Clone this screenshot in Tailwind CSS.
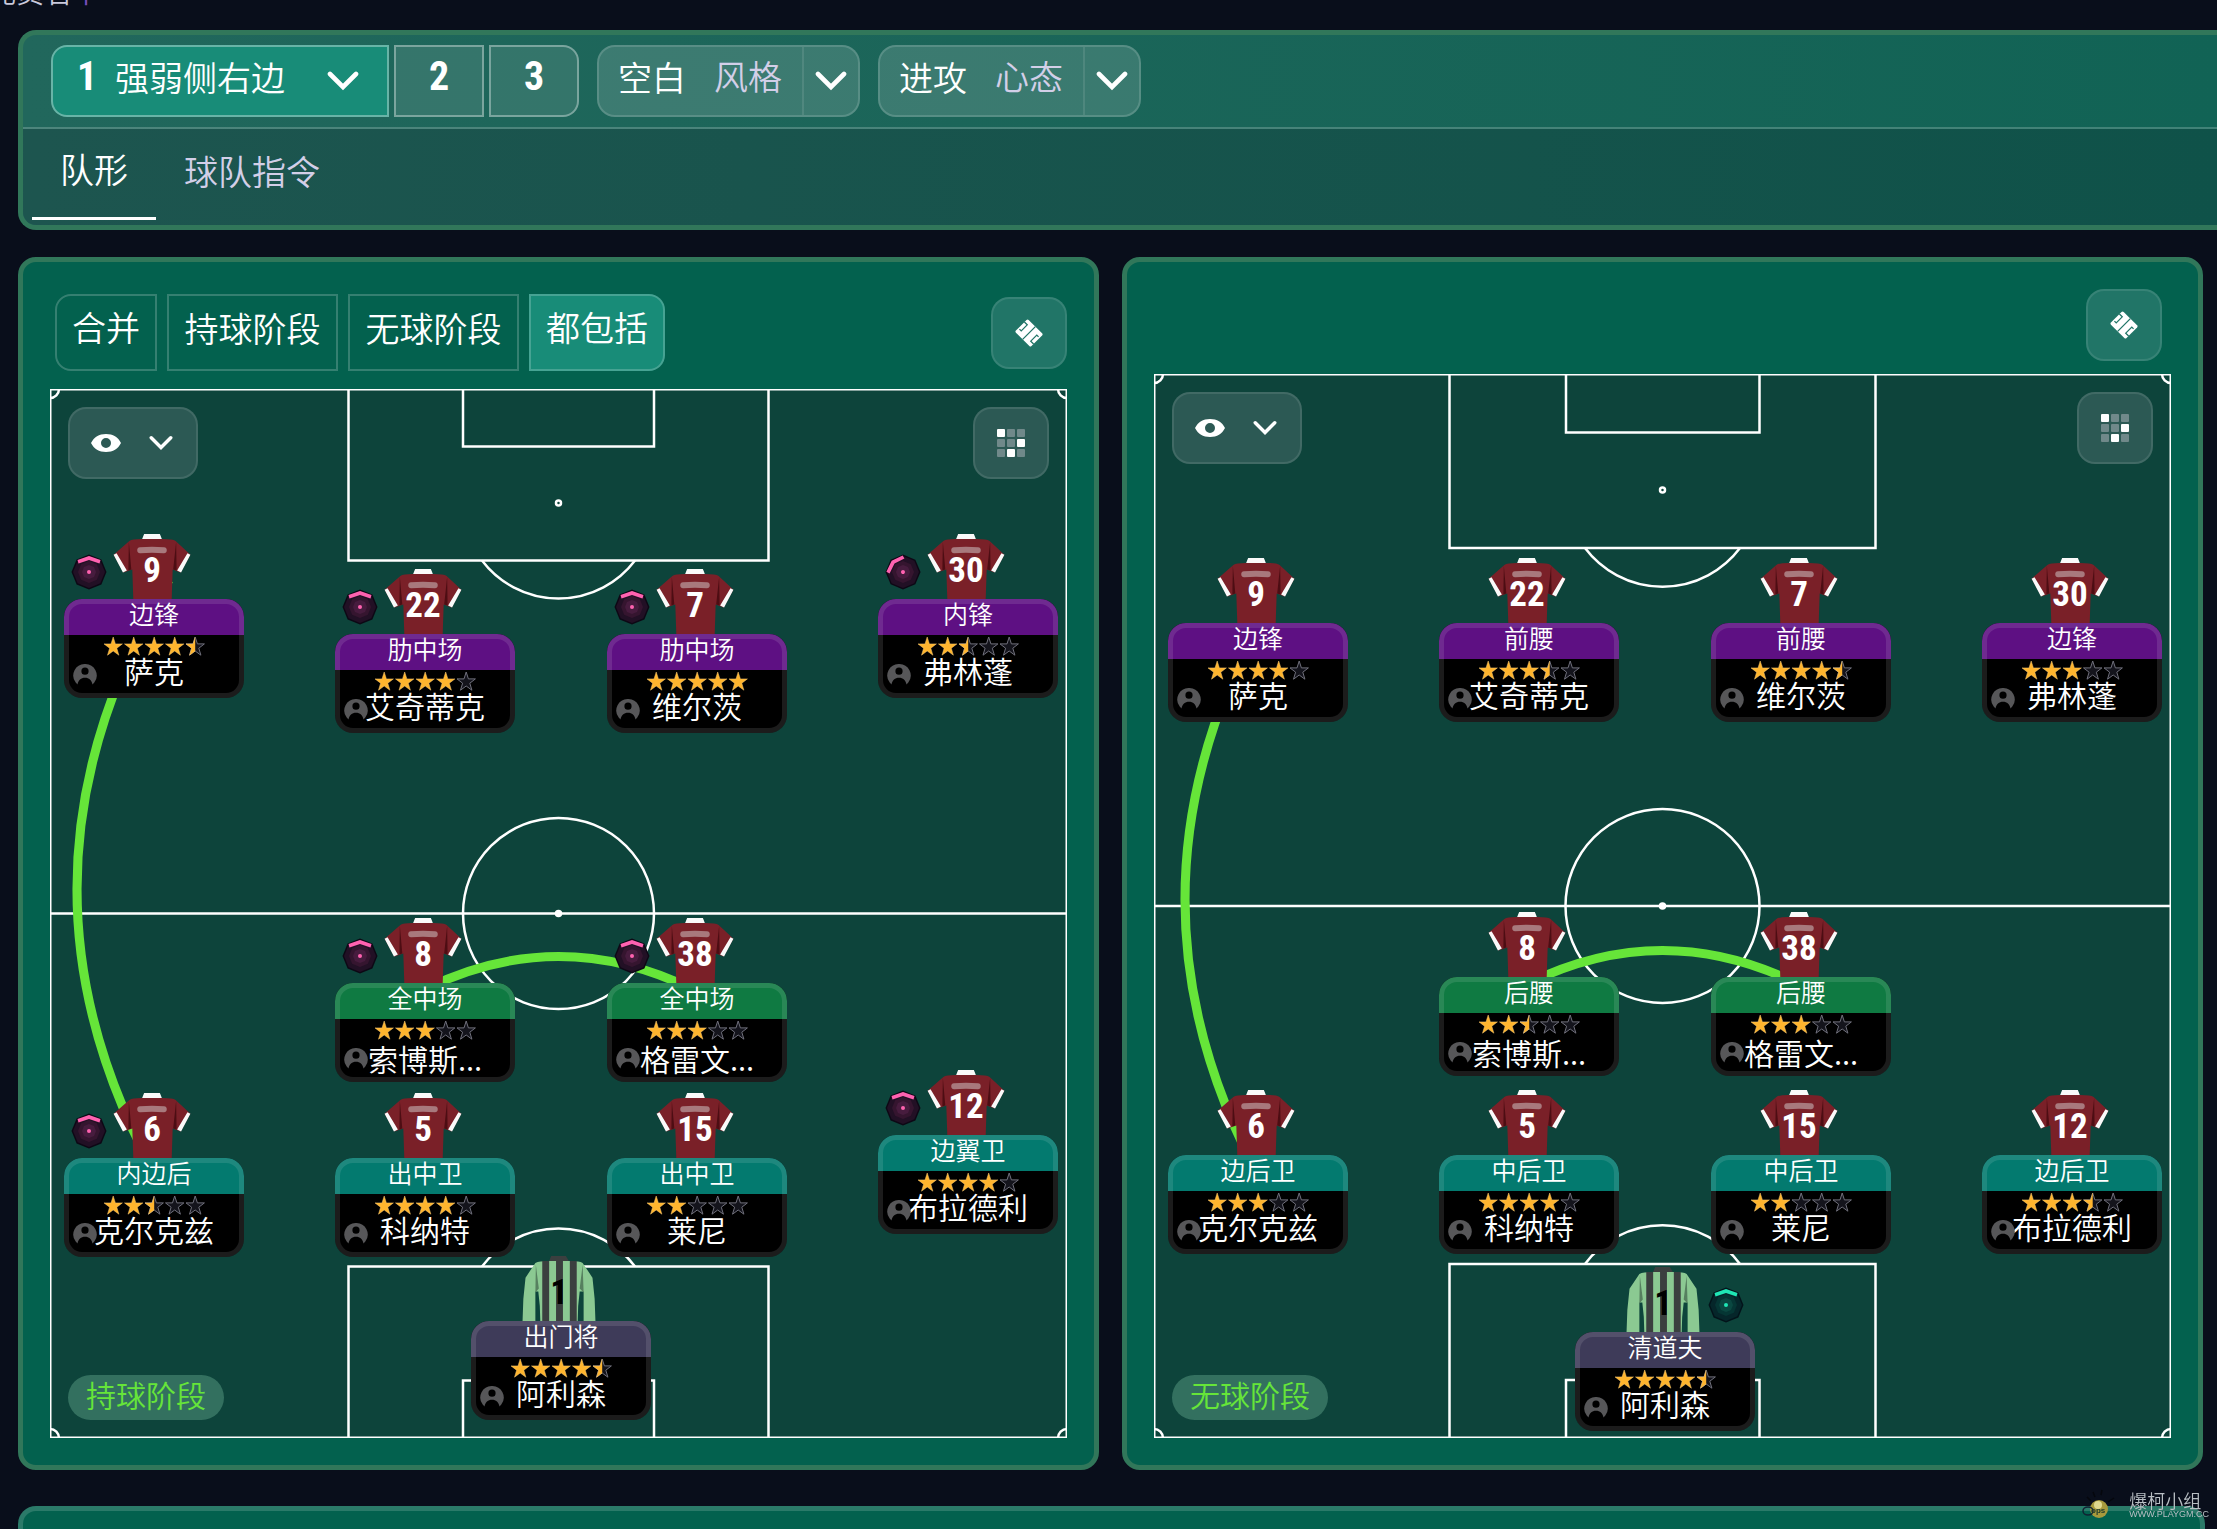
<!DOCTYPE html>
<html lang="zh-CN">
<head>
    <meta charset="UTF-8">
    <meta name="viewport" content="width=device-width, initial-scale=1.0">
    <title>战术 - 队形</title>
    <script src="https://cdn.jsdelivr.net/npm/@tailwindcss/browser@4"></script>
</head>
<body class="bg-[#090e1b] min-h-screen text-white overflow-x-hidden font-[350] font-['Noto_Sans_CJK_SC',sans-serif]">

    <!-- shared icons -->
    <svg class="absolute size-0">
        <symbol id="chevron" viewBox="0 0 32 20">
            <path d="M3 3 16 16 29 3" fill="none" stroke="#fff" stroke-width="4.6" stroke-linecap="round"/>
        </symbol>
        <symbol id="eye" viewBox="0 0 30 18">
            <path fill="#fff" fill-rule="evenodd" d="M15 0C22 0 27 3 30 9 27 15 22 18 15 18S3 15 0 9C3 3 8 0 15 0ZM15 4a5 5 0 1 0 0 10a5 5 0 1 0 0-10Z"/>
        </symbol>
        <symbol id="field" viewBox="-15 -15 30 30">
            <g transform="rotate(45)">
                <rect x="-11" y="-9" width="22" height="18" rx="1.5" fill="#fff"/>
                <path d="M0-9V9M-11-4.500H-7V4H-9.500M11 4.500H7V-4H9.500" fill="none" stroke="#217567" stroke-width="1.3"/>
            </g>
        </symbol>
        <symbol id="cells" viewBox="0 0 28 28">
            <g fill="#70898a">
                <rect x="10" width="8" height="8" rx="1"/><rect x="20" width="8" height="8" rx="1"/>
                <rect y="10" width="8" height="8" rx="1"/><rect x="10" y="10" width="8" height="8" rx="1"/>
                <rect y="20" width="8" height="8" rx="1"/><rect x="20" y="20" width="8" height="8" rx="1"/>
            </g>
            <g fill="#fff">
                <rect width="8" height="8" rx="1"/><rect x="20" y="10" width="8" height="8" rx="1"/><rect x="10" y="20" width="8" height="8" rx="1"/>
            </g>
        </symbol>
        <symbol id="person" viewBox="0 0 24 21">
            <path fill="#575759" fill-rule="evenodd" d="M12 0a11.500 11.500 0 0 1 9.300 18.500L19.500 20.500C18.800 16.500 16 13.800 12 13.800S5.200 16.500 4.500 20.500L2.700 18.500A11.500 11.500 0 0 1 12 0ZM12 3.600a3.600 3.600 0 1 0 0 7.200a3.600 3.600 0 1 0 0-7.200Z"/>
        </symbol>
        <symbol id="shirt" viewBox="0 0 78 66">
            <path d="M16 7 0 21 10 39 19 36 20 66H59L60 36 68 39 78 21 63 7Q60 5 50 5H28Q19 5 16 7Z" fill="#7a2028"/>
            <path d="M15.500 8 18 36 15 37ZM63.500 8 60.500 36 64 37Z" fill="#4d0d13"/>
            <path d="M31 0H47L49 5H29Z" fill="#fafafa"/>
            <path d="M0 21 3 19.500 13.500 37 9.500 39ZM78 21 75 19.500 64.500 37 68.500 39Z" fill="#fafafa"/>
            <path d="M27 16.500Q39 15.500 51 16.500" fill="none" stroke="#a8797d" stroke-width="6" stroke-linecap="round"/>
        </symbol>
        <symbol id="keeper" viewBox="0 0 78 66">
            <path d="M15 7 5 22Q2 44 2 66H15V36L18 36Q20 50 20 66H58Q58 50 60 36L64 36V66H76Q76 44 73 22L63 7Q60 5 50 5H28Q19 5 15 7Z" fill="#8bc992"/>
            <path d="M15.500 9 18.500 33 15 37ZM63 9 60 33 64 37Z" fill="#56805f"/>
            <path d="M31 0H46L49 5H29Z" fill="#3b3f3f"/>
            <path d="M22 5H29V66H22ZM36 5H43V66H36ZM50 5H57V66H50Z" fill="#3b3f3f"/>
        </symbol>
        <symbol id="focus" viewBox="-18 -18 36 36">
            <path d="M0-17.500 12.400-12.400 17.500 0 12.400 12.400 0 17.500-12.400 12.400-17.500 0-12.400-12.400Z" fill="#0d0815"/>
            <path d="M0-16 11.300-11.300 16 0 11.300 11.300 0 16-11.300 11.300-16 0-11.300-11.300Z" fill="#221025"/>
            <path d="M0-11 7.800-7.800 11 0 7.800 7.800 0 11-7.800 7.800-11 0-7.800-7.800Z" fill="#35152f"/>
            <path d="M0-7 5-5 7 0 5 5 0 7-5 5-7 0-5-5Z" fill="#471c3e"/>
            <path d="M-11.500-12 0-16 11.500-12 10.500-8.500 0-12-10.500-8.500Z" fill="#ff62b0"/>
            <circle r="2" fill="#ff62b0"/>
        </symbol>
        <symbol id="focus-green" viewBox="-18 -18 36 36">
            <path d="M0-17.500 12.400-12.400 17.500 0 12.400 12.400 0 17.500-12.400 12.400-17.500 0-12.400-12.400Z" fill="#03131a"/>
            <path d="M0-16 11.300-11.300 16 0 11.300 11.300 0 16-11.300 11.300-16 0-11.300-11.300Z" fill="#05262a"/>
            <path d="M0-11 7.800-7.800 11 0 7.800 7.800 0 11-7.800 7.800-11 0-7.800-7.800Z" fill="#053634"/>
            <path d="M0-7 5-5 7 0 5 5 0 7-5 5-7 0-5-5Z" fill="#0a4841"/>
            <path d="M-11.500-12 0-16 11.500-12 10.500-8.500 0-12-10.500-8.500Z" fill="#1fe6b4"/>
            <circle r="2" fill="#1fe6b4"/>
        </symbol>
        <path id="star" d="M9.200 0 11.400 6.900H18.400L12.800 11.200 14.900 18.200 9.200 14 3.500 18.200 5.600 11.200 0 6.900H7Z"/>
        <clipPath id="half"><rect y="-1" width="9.200" height="20"/></clipPath>
    </svg>

    <div class="h-[30px] overflow-hidden">
        <p class="-mt-6 -ml-3 text-[28px] leading-[30px] text-[#c9c9dc]">完员名<span class="text-[#7a4fc0]">十</span></p>
    </div>

    <!-- tactic bar -->
    <header class="ml-[18px] h-[200px] border-[5px] border-r-0 border-[#31775a] rounded-l-[18px] bg-linear-to-r from-[#21675c] to-[#116355]">
        <div class="flex h-[94px] items-center gap-[18px] border-b-2 border-white/20 pl-7">
            <div class="flex h-[72px] gap-[5px] text-[34px]">
                <div class="relative w-[338px] rounded-l-2xl border-2 border-white/35 bg-[#188c78]">
                    <label for="tactic" class="absolute top-[10px] left-6 font-['Roboto_Condensed','Roboto','Liberation_Sans',sans-serif] text-[40px] leading-10 font-bold">1</label>
                    <select id="tactic" class="h-full w-full appearance-none bg-transparent pb-[10px] pl-[62px]"><option>强弱侧右边</option></select>
                    <svg class="pointer-events-none absolute top-6 right-7 h-5 w-8"><use href="#chevron"/></svg>
                </div>
                <button class="w-[90px] border-2 border-white/35 bg-white/10 pb-2 font-['Roboto_Condensed','Roboto','Liberation_Sans',sans-serif] text-[40px] font-bold">2</button>
                <button class="w-[90px] rounded-r-2xl border-2 border-white/35 bg-white/10 pb-2 font-['Roboto_Condensed','Roboto','Liberation_Sans',sans-serif] text-[40px] font-bold">3</button>
            </div>
            <div class="relative h-[72px] w-[263px] rounded-[18px] border-2 border-white/15 bg-white/14 text-[34px]">
                <select id="style" class="h-full w-full appearance-none bg-transparent pb-[10px] pl-[19px]"><option>空白</option></select>
                <label for="style" class="pointer-events-none absolute top-0 left-[115px] leading-[58px] text-[#d3cfe8]">风格</label>
                <span class="pointer-events-none absolute inset-y-0 right-0 flex w-[56px] items-center justify-center border-l-2 border-white/10"><svg class="h-5 w-8"><use href="#chevron"/></svg></span>
            </div>
            <div class="relative h-[72px] w-[263px] rounded-[18px] border-2 border-white/15 bg-white/14 text-[34px]">
                <select id="mentality" class="h-full w-full appearance-none bg-transparent pb-[10px] pl-[19px]"><option>进攻</option></select>
                <label for="mentality" class="pointer-events-none absolute top-0 left-[115px] leading-[58px] text-[#d3cfe8]">心态</label>
                <span class="pointer-events-none absolute inset-y-0 right-0 flex w-[56px] items-center justify-center border-l-2 border-white/10"><svg class="h-5 w-8"><use href="#chevron"/></svg></span>
            </div>
        </div>
        <nav class="flex h-24 rounded-bl-[13px] bg-linear-to-r from-[#1d554f] to-[#0f5249] pl-[9px] text-[34px] leading-[80px]">
            <a href="#" class="relative w-[124px] text-center after:absolute after:inset-x-0 after:bottom-[5px] after:h-[3px] after:bg-white">队形</a>
            <a href="#" class="px-7 pt-[2px] text-[#d3cfe8]">球队指令</a>
        </nav>
    </header>

    <main class="mt-[27px] ml-[18px] mr-[14px] grid grid-cols-2 gap-[23px]">
        <section class="rounded-[18px] border-[5px] border-[#31775a] bg-[#03614e] px-[27px] pt-8 pb-[27px]">
            <div class="mb-[18px] flex items-center justify-between">
                <div class="flex h-[77px] gap-[10px] pl-[5px] text-[34px]">
                    <button class="w-[102px] rounded-l-2xl border-2 border-white/20 pb-3">合并</button>
                    <button class="w-[171px] border-2 border-white/20 pb-[10px]">持球阶段</button>
                    <button class="w-[171px] border-2 border-white/20 pb-[10px]">无球阶段</button>
                    <button class="w-[136px] rounded-r-2xl border-2 border-white/20 bg-[#188c78] pb-3">都包括</button>
                </div>
                <button aria-label="球场样式" class="flex h-[72px] w-[76px] items-center justify-center rounded-[18px] border-2 border-white/10 bg-[#217567]"><svg class="size-[30px]"><use href="#field"/></svg></button>
            </div>
            <div id="inPossession" class="relative aspect-[1017/1049] w-full bg-[#0d443b]">
                <svg viewBox="0 0 1017 1049" class="absolute inset-0 h-full w-full" fill="none" stroke="#fff" stroke-width="2.500">
                    <rect x=".75" y=".75" width="1015.5" height="1047.5" stroke-width="1.500"/>
                    <path d="M0 524.500H1017M298.500 0V171.500H718.500V0M413 0V57.500H604V0M298.500 1049V877.500H718.500V1049M413 1049V991.500H604V1049"/>
                    <path d="M432 171.500A96 96 0 0 0 585 171.500M432 877.500A96 96 0 0 1 585 877.500"/>
                    <path d="M9 0A9 9 0 0 1 0 9M1008 0A9 9 0 0 0 1017 9M0 1040A9 9 0 0 1 9 1049M1017 1040A9 9 0 0 0 1008 1049"/>
                    <circle cx="508.500" cy="524.500" r="95.500"/><circle cx="508.500" cy="524.500" r="2.500" fill="#fff"/><circle cx="508.500" cy="114" r="2.500"/>
                    <path d="M119 191Q-65 500 119 809M375 600Q508.500 535 642 600" stroke="#66e539" stroke-width="9"/>
                </svg>
                <button aria-label="显示" class="absolute top-[18px] left-[18px] flex h-[72px] w-[130px] items-center justify-center gap-7 rounded-[18px] border-2 border-white/10 bg-[#2c5954] pr-[2px]"><svg class="h-[18px] w-[30px]"><use href="#eye"/></svg><svg class="h-4 w-6"><use href="#chevron"/></svg></button>
                <button aria-label="网格" class="absolute top-[18px] right-[18px] flex h-[72px] w-[76px] items-center justify-center rounded-[18px] border-2 border-white/10 bg-[#2c5954]"><svg class="size-7"><use href="#cells"/></svg></button>
                <span class="absolute bottom-[18px] left-[18px] h-[45px] rounded-full bg-[#33705f] px-[18px] text-[30px] leading-[38px] text-[#66e539]">持球阶段</span>
            </div>
        </section>

        <section class="rounded-[18px] border-[5px] border-[#31775a] bg-[#03614e] px-[27px] pt-[27px] pb-[27px]">
            <div class="mb-[13px] flex justify-end pr-[9px]">
                <button aria-label="球场样式" class="flex h-[72px] w-[76px] items-center justify-center rounded-[18px] border-2 border-white/10 bg-[#217567]"><svg class="size-[30px]"><use href="#field"/></svg></button>
            </div>
            <div id="outOfPossession" class="relative aspect-[1017/1064] w-full bg-[#0d443b]">
                <svg viewBox="0 0 1017 1064" class="absolute inset-0 h-full w-full" fill="none" stroke="#fff" stroke-width="2.500">
                    <rect x=".75" y=".75" width="1015.5" height="1062.5" stroke-width="1.500"/>
                    <path d="M0 532H1017M295.500 0V174H721.500V0M412 0V58.500H605.500V0M295.500 1064V890H721.500V1064M412 1064V1006H605.500V1064"/>
                    <path d="M431 174A97 97 0 0 0 586 174M431 890A97 97 0 0 1 586 890"/>
                    <path d="M9 0A9 9 0 0 1 0 9M1008 0A9 9 0 0 0 1017 9M0 1055A9 9 0 0 1 9 1064M1017 1055A9 9 0 0 0 1008 1064"/>
                    <circle cx="508.500" cy="532" r="97"/><circle cx="508.500" cy="532" r="2.500" fill="#fff"/><circle cx="508.500" cy="116" r="2.500"/>
                    <path d="M115 230Q-53 526 115 821M375 609Q508.500 544 642 609" stroke="#66e539" stroke-width="9"/>
                </svg>
                <button aria-label="显示" class="absolute top-[18px] left-[18px] flex h-[72px] w-[130px] items-center justify-center gap-7 rounded-[18px] border-2 border-white/10 bg-[#2c5954] pr-[2px]"><svg class="h-[18px] w-[30px]"><use href="#eye"/></svg><svg class="h-4 w-6"><use href="#chevron"/></svg></button>
                <button aria-label="网格" class="absolute top-[18px] right-[18px] flex h-[72px] w-[76px] items-center justify-center rounded-[18px] border-2 border-white/10 bg-[#2c5954]"><svg class="size-7"><use href="#cells"/></svg></button>
                <span class="absolute bottom-[18px] left-[18px] h-[45px] rounded-full bg-[#33705f] px-[18px] text-[30px] leading-[38px] text-[#66e539]">无球阶段</span>
            </div>
        </section>
    </main>

    <section class="mt-9 mr-3 ml-[18px] h-[23px] rounded-t-[18px] border-[5px] border-b-0 border-[#2b7a69] bg-[#03614e]"></section>

    <!-- site mark -->
    <div class="fixed right-2 bottom-2 flex items-center gap-3 text-[#b9bfc4]">
        <svg viewBox="0 0 36 32" class="h-8 w-9">
            <path d="M6 8 10 12M21 1 20 6M33 9 27 13M12 3 14 8" stroke="#05070d" stroke-width="1.500"/>
            <circle cx="18" cy="20" r="9" fill="#a89a3c"/><circle cx="17" cy="16" r="4" fill="#e0d98e"/>
            <ellipse cx="7" cy="22" rx="5" ry="4" fill="none" stroke="#123" stroke-width="1.500"/>
            <text x="10" y="24" font-size="8" font-weight="bold" font-family="Liberation Sans" fill="#1c3a2c">ops</text>
        </svg>
        <div class="leading-none">
            <p class="text-[18px] leading-[18px]">爆柯小组</p>
            <p class="font-['Liberation_Sans'] text-[9px] leading-[10px]">WWW.PLAYGM.CC</p>
        </div>
    </div>

    <script>
        // x, y: top left corner of the name card on the pitch
        const inPossession = [
            { no: 9, role: "边锋", name: "萨克", stars: 4.5, x: 14, y: 210, kind: "wing", focus: 0 },
            { no: 22, role: "肋中场", name: "艾奇蒂克", stars: 4, x: 285, y: 245, kind: "wing", focus: 0 },
            { no: 7, role: "肋中场", name: "维尔茨", stars: 5, x: 557, y: 245, kind: "wing", focus: 0 },
            { no: 30, role: "内锋", name: "弗林蓬", stars: 2.5, x: 828, y: 210, kind: "wing", focus: -45 },
            { no: 8, role: "全中场", name: "索博斯...", stars: 3, x: 285, y: 594, kind: "mid", focus: 0 },
            { no: 38, role: "全中场", name: "格雷文...", stars: 3, x: 557, y: 594, kind: "mid", focus: 0 },
            { no: 6, role: "内边后", name: "克尔克兹", stars: 2.5, x: 14, y: 769, kind: "back", focus: 0 },
            { no: 5, role: "出中卫", name: "科纳特", stars: 4, x: 285, y: 769, kind: "back" },
            { no: 15, role: "出中卫", name: "莱尼", stars: 2, x: 557, y: 769, kind: "back" },
            { no: 12, role: "边翼卫", name: "布拉德利", stars: 4, x: 828, y: 746, kind: "back", focus: 0 },
            { no: 1, role: "出门将", name: "阿利森", stars: 4.5, x: 421, y: 932, kind: "gk" },
        ];
        const outOfPossession = [
            { no: 9, role: "边锋", name: "萨克", stars: 4, x: 14, y: 249, kind: "wing" },
            { no: 22, role: "前腰", name: "艾奇蒂克", stars: 3.5, x: 285, y: 249, kind: "wing" },
            { no: 7, role: "前腰", name: "维尔茨", stars: 4.5, x: 557, y: 249, kind: "wing" },
            { no: 30, role: "边锋", name: "弗林蓬", stars: 3, x: 828, y: 249, kind: "wing" },
            { no: 8, role: "后腰", name: "索博斯...", stars: 2.5, x: 285, y: 603, kind: "mid" },
            { no: 38, role: "后腰", name: "格雷文...", stars: 3, x: 557, y: 603, kind: "mid" },
            { no: 6, role: "边后卫", name: "克尔克兹", stars: 3, x: 14, y: 781, kind: "back" },
            { no: 5, role: "中后卫", name: "科纳特", stars: 4, x: 285, y: 781, kind: "back" },
            { no: 15, role: "中后卫", name: "莱尼", stars: 2, x: 557, y: 781, kind: "back" },
            { no: 12, role: "边后卫", name: "布拉德利", stars: 3.5, x: 828, y: 781, kind: "back" },
            { no: 1, role: "清道夫", name: "阿利森", stars: 4.5, x: 421, y: 958, kind: "gk", focus: 0 },
        ];
        const roleColors = { wing: "bg-[#5e1083]", mid: "bg-[#0f7a42]", back: "bg-[#037a6f]", gk: "bg-[#3e3b59]" };

        function starRow(value) {
            let out = "";
            for (let i = 0; i < 5; i++) {
                const x = i * 20.5;
                const empty = `<use href="#star" x="${x}" fill="#14141c" stroke="#70707c" stroke-width="1"/>`;
                const full = `<use href="#star" fill="#ffb52e" stroke="#f7c873" stroke-width=".5"/>`;
                if (value >= i + 1) out += `<g transform="translate(${x})">${full}</g>`;
                else if (value > i) out += empty + `<g transform="translate(${x})" clip-path="url(#half)">${full}</g>`;
                else out += empty;
            }
            return `<svg viewBox="-1 -2 102 22" class="mx-auto h-[22px] w-[102px]">${out}</svg>`;
        }

        function playerCard(p, w, h) {
            const gk = p.kind === "gk";
            const focusSide = gk ? "left-[133px]" : "left-[7px]";
            const nameLine = p.name.endsWith("...") ? "leading-[34px]" : "leading-[26px]";
            const focus = p.focus === undefined ? "" :
                `<svg class="absolute top-5 size-9 ${focusSide}" style="transform:rotate(${p.focus}deg)"><use href="${gk ? "#focus-green" : "#focus"}"/></svg>`;
            return `
                <div class="absolute w-[180px]" style="left:${p.x / w * 100}%;top:${(p.y - 65) / h * 100}%">
                    ${focus}
                    <div class="relative ml-[49px] h-[65px] w-[78px]">
                        <svg class="h-[65px] w-[78px]" preserveAspectRatio="none"><use href="${gk ? "#keeper" : "#shirt"}"/></svg>
                        <span class="absolute inset-x-0 top-[19px] text-center font-['Roboto_Condensed','Roboto','Liberation_Sans',sans-serif] text-[35px] leading-9 font-bold ${gk ? "text-black" : "text-white"}">${p.no}</span>
                    </div>
                    <div class="relative h-[99px] rounded-[18px] bg-black text-center">
                        <div class="h-9 rounded-t-[18px] text-[25px] leading-[28px] ${roleColors[p.kind]}">${p.role}</div>
                        ${starRow(p.stars)}
                        <div class="text-[30px] ${nameLine}">${p.name}</div>
                        <svg class="absolute bottom-[13px] left-[9px] h-[21px] w-6"><use href="#person"/></svg>
                        <div class="absolute inset-0 rounded-[18px] border-[5px] border-white/11"></div>
                    </div>
                </div>`;
        }

        document.getElementById("inPossession").insertAdjacentHTML("beforeend", inPossession.map(p => playerCard(p, 1017, 1049)).join(""));
        document.getElementById("outOfPossession").insertAdjacentHTML("beforeend", outOfPossession.map(p => playerCard(p, 1017, 1064)).join(""));
    </script>
</body>
</html>
